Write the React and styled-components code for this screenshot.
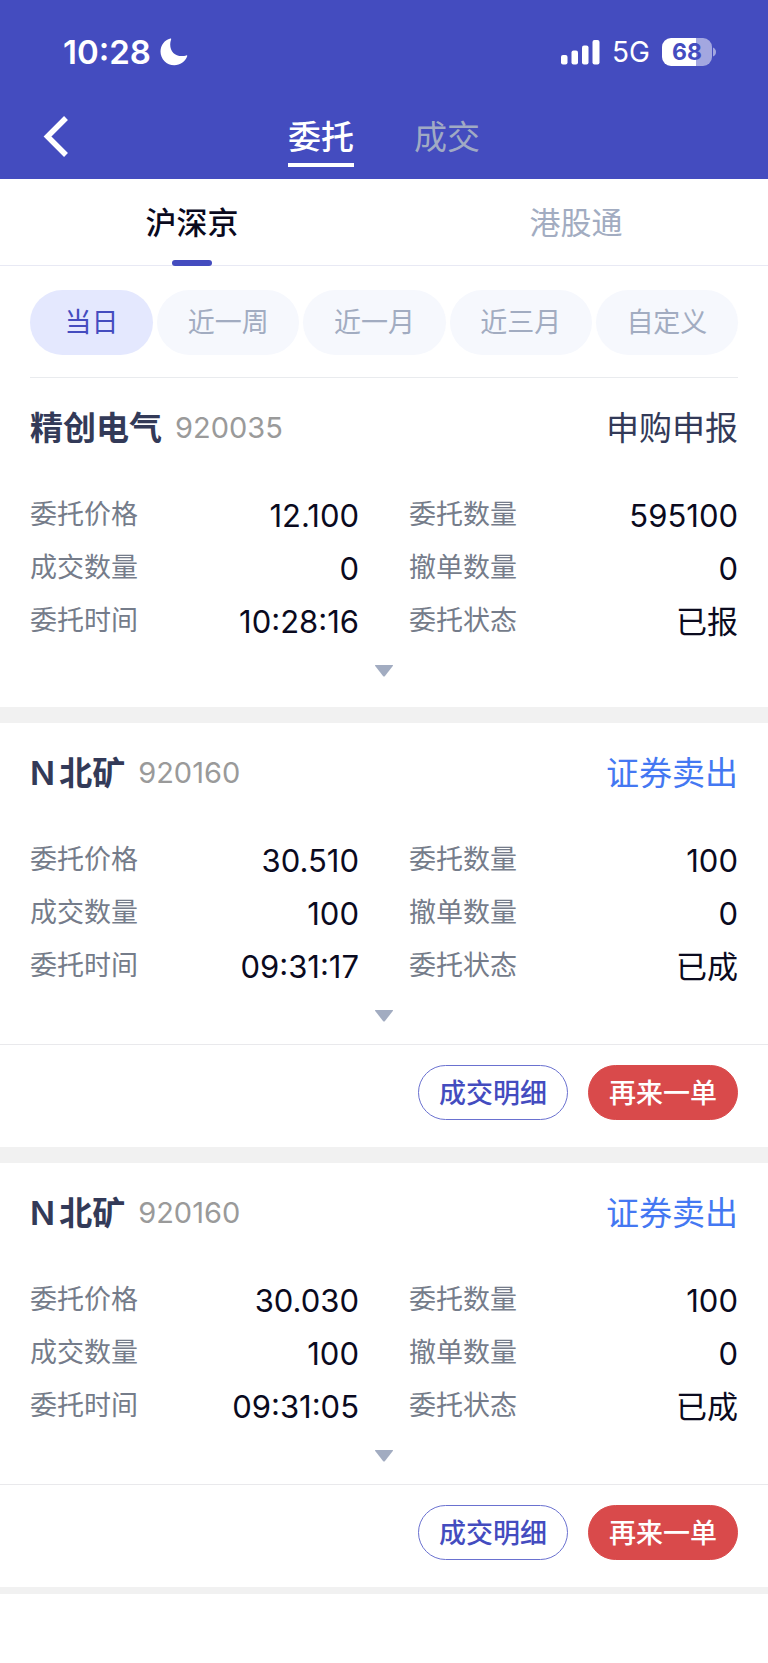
import { useState } from 'react';
import { createGlobalStyle, styled } from 'styled-components';

const ranges = ['当日', '近一周', '近一月', '近三月', '自定义'];

const orders = [
  {
    id: 1,
    name: '精创电气',
    code: '920035',
    type: '申购申报',
    price: '12.100',
    amount: '595100',
    filled: '0',
    cancelled: '0',
    time: '10:28:16',
    status: '已报',
  },
  {
    id: 2,
    name: 'N北矿',
    code: '920160',
    type: '证券卖出',
    sell: true,
    price: '30.510',
    amount: '100',
    filled: '100',
    cancelled: '0',
    time: '09:31:17',
    status: '已成',
  },
  {
    id: 3,
    name: 'N北矿',
    code: '920160',
    type: '证券卖出',
    sell: true,
    price: '30.030',
    amount: '100',
    filled: '100',
    cancelled: '0',
    time: '09:31:05',
    status: '已成',
  },
];

const StatusBar = () => {
  return (
    <StyledStatusBar>
      <StyledClock>
        10:28
        <svg width='28' height='28' viewBox='0 0 28 28' aria-hidden='true'>
          <path
            d='M10.4 .5C4.6 2 .5 7.200 .5 13.400C.5 21 6.700 27.200 14.300 27.200C20.200 27.200 25.100 23.600 27.200 18.300C27.400 17.700 27 17.200 26.300 17.400C24.900 17.900 23.300 18.100 21.800 18.100C14.800 18.100 10.200 13.400 10.200 6.500C10.200 4.700 10.500 3 11.100 1.500C11.400 .8 11 .3 10.400 .5Z'
            fill='#fff'
          />
        </svg>
      </StyledClock>
      <StyledSignals>
        <svg width='39' height='25' viewBox='0 0 39 25' aria-hidden='true'>
          <g fill='#fff'>
            <rect x='0' y='15' width='6.500' height='9.500' rx='2' />
            <rect x='10.500' y='10.500' width='6.500' height='14' rx='2' />
            <rect x='21' y='5.500' width='6.500' height='19' rx='2' />
            <rect x='31.500' y='0' width='7' height='24.500' rx='2' />
          </g>
        </svg>
        <StyledNetwork>5G</StyledNetwork>
        <StyledBattery>
          <StyledBatteryBody>68</StyledBatteryBody>
          <svg width='3' height='10' viewBox='0 0 3 10' aria-hidden='true'>
            <path d='M0 .5C2 1.500 3 3 3 5S2 8.500 0 9.500Z' fill='#a3a7e0' />
          </svg>
        </StyledBattery>
      </StyledSignals>
    </StyledStatusBar>
  );
};

const Field = ({ label, value }) => {
  return (
    <StyledField>
      <dt>{label}</dt>
      <dd>{value}</dd>
    </StyledField>
  );
};

const Order = ({ order }) => {
  return (
    <StyledOrder>
      <StyledOrderBody $compact={order.sell}>
        <StyledOrderHead>
          <StyledName>{order.name}</StyledName>
          <StyledCode>{order.code}</StyledCode>
          <StyledType $sell={order.sell}>{order.type}</StyledType>
        </StyledOrderHead>
        <StyledFields>
          <Field label='委托价格' value={order.price} />
          <Field label='委托数量' value={order.amount} />
          <Field label='成交数量' value={order.filled} />
          <Field label='撤单数量' value={order.cancelled} />
          <Field label='委托时间' value={order.time} />
          <Field label='委托状态' value={order.status} />
        </StyledFields>
        <StyledExpand aria-label='展开'>
          <svg width='20' height='12' viewBox='0 0 20 12'>
            <path d='M1.500 0H18.500Q19.500 0 18.800 1L11 11Q10 12 9 11L1.200 1Q.5 0 1.500 0Z' fill='#a2acc1' />
          </svg>
        </StyledExpand>
      </StyledOrderBody>
      {order.sell && (
        <StyledActions>
          <StyledAction>成交明细</StyledAction>
          <StyledAction $primary>再来一单</StyledAction>
        </StyledActions>
      )}
    </StyledOrder>
  );
};

const App = () => {
  const [page, setPage] = useState('委托');
  const [market, setMarket] = useState('沪深京');
  const [range, setRange] = useState('当日');

  return (
    <>
      <GlobalStyle />
      <StyledHeader>
        <StatusBar />
        <StyledNav>
          <StyledBack aria-label='返回'>
            <svg width='26' height='42' viewBox='0 0 26 42'>
              <path d='M23 2L4.500 20.500L23 39' fill='none' stroke='#fff' strokeWidth='5.500' />
            </svg>
          </StyledBack>
          <StyledPages>
            {['委托', '成交'].map((item) => (
              <StyledPage key={item} $active={item === page} onClick={() => setPage(item)}>
                {item}
              </StyledPage>
            ))}
          </StyledPages>
        </StyledNav>
      </StyledHeader>
      <main>
        <StyledMarkets>
          {['沪深京', '港股通'].map((item) => (
            <StyledMarket key={item} $active={item === market} onClick={() => setMarket(item)}>
              {item}
            </StyledMarket>
          ))}
        </StyledMarkets>
        <StyledRanges>
          {ranges.map((item) => (
            <StyledRange
              key={item}
              $short={item.length === 2}
              $active={item === range}
              onClick={() => setRange(item)}
            >
              {item}
            </StyledRange>
          ))}
        </StyledRanges>
        <StyledOrders>
          {orders.map((order) => (
            <Order key={order.id} order={order} />
          ))}
        </StyledOrders>
      </main>
    </>
  );
};

export default App;

const GlobalStyle = createGlobalStyle`
  * {
    box-sizing: border-box;
  }

  body {
    margin: 0;
    background: #fff;
    font-family: Inter, 'Noto Sans CJK SC', sans-serif;
    text-autospace: normal;
  }

  button {
    padding: 0;
    border: 0;
    background: none;
    color: inherit;
    font: inherit;
    cursor: pointer;
  }

  svg {
    display: block;
  }
`;

const StyledHeader = styled.header`
  background: #444cbf;
  color: #fff;
`;

const StyledStatusBar = styled.div`
  display: flex;
  justify-content: space-between;
  align-items: center;
  height: 94px;
  padding: 10px 52px 0 63px;
`;

const StyledClock = styled.div`
  display: flex;
  align-items: center;
  gap: 9px;
  font-size: 33px;
  font-weight: 600;
  line-height: 40px;
`;

const StyledSignals = styled.div`
  display: flex;
  align-items: center;
  gap: 12px;
`;

const StyledNetwork = styled.span`
  font-size: 28px;
  line-height: 32px;
`;

const StyledBattery = styled.div`
  display: flex;
  align-items: center;
  gap: 1px;
`;

const StyledBatteryBody = styled.span`
  width: 50px;
  border-radius: 9px;
  background: linear-gradient(to right, #fff 68%, #a3a7e0 68%);
  color: #444cbf;
  font-size: 23px;
  font-weight: 700;
  line-height: 28px;
  text-align: center;
`;

const StyledNav = styled.nav`
  display: grid;
  grid-template-columns: 1fr auto 1fr;
  height: 85px;
`;

const StyledBack = styled.button`
  justify-self: start;
  align-self: center;
  margin-left: 43px;
`;

const StyledPages = styled.div`
  display: flex;
  align-items: flex-start;
  gap: 60px;
`;

const StyledPage = styled.button`
  height: 73px;
  padding-top: 17px;
  border-bottom: 4px solid ${({ $active }) => ($active ? '#fff' : 'transparent')};
  color: ${({ $active }) => ($active ? '#fff' : '#a0aac4')};
  font-size: 33px;
  font-weight: ${({ $active }) => ($active ? 500 : 400)};
  line-height: 40px;
`;

const StyledMarkets = styled.div`
  display: flex;
  border-bottom: 1px solid #e8e9f4;
`;

const StyledMarket = styled.button`
  display: flex;
  flex: 1;
  flex-direction: column;
  align-items: center;
  justify-content: space-between;
  height: 87px;
  margin-bottom: -1px;
  padding-top: 24px;
  color: ${({ $active }) => ($active ? '#0a0a1e' : '#a2acc1')};
  font-size: 31px;
  font-weight: ${({ $active }) => ($active ? 500 : 400)};
  line-height: 40px;

  &::after {
    content: '';
    width: 40px;
    height: 6px;
    border-radius: 3px;
    background: ${({ $active }) => ($active ? '#444cbf' : 'transparent')};
  }
`;

const StyledRanges = styled.div`
  display: flex;
  gap: 4px;
  margin: 0 30px;
  padding: 24px 0 22px;
  border-bottom: 1px solid #e9ebee;
`;

const StyledRange = styled.button`
  flex: ${({ $short }) => ($short ? '123 1 0' : '142 1 0')};
  border-radius: 33px;
  background: ${({ $active }) => ($active ? '#e4e8fe' : '#f6f8fd')};
  color: ${({ $active }) => ($active ? '#444cbf' : '#a2acc1')};
  font-size: 27px;
  line-height: 65px;
`;

const StyledOrders = styled.div`
  display: flex;
  flex-direction: column;
`;

const StyledOrder = styled.article`
  border-bottom: 16px solid #f1f1f1;

  &:last-child {
    border-bottom-width: 7px;
  }
`;

const StyledOrderBody = styled.div`
  padding: 26px 30px ${({ $compact }) => ($compact ? 12 : 20)}px;
`;

const StyledOrderHead = styled.div`
  display: flex;
  align-items: center;
  height: 48px;
  line-height: 48px;
`;

const StyledName = styled.h2`
  margin: 0;
  color: #333a58;
  font-size: 33px;
  font-weight: 600;
`;

const StyledCode = styled.span`
  margin-left: 13px;
  color: #9a9a9a;
  font-size: 29px;
`;

const StyledType = styled.span`
  margin-left: auto;
  color: ${({ $sell }) => ($sell ? '#4478f2' : '#333a58')};
  font-size: 33px;
`;

const StyledFields = styled.dl`
  display: grid;
  grid-template-columns: 1fr 1fr;
  column-gap: 50px;
  margin: 36px 0 0;
`;

const StyledField = styled.div`
  display: flex;
  justify-content: space-between;
  height: 53px;

  dt {
    color: #757c8a;
    font-size: 27px;
    line-height: 53px;
  }

  dd {
    margin: 0;
    padding-top: 1px;
    color: #0a0a1e;
    font-size: 31px;
    line-height: 53px;
  }
`;

const StyledExpand = styled.button`
  display: flex;
  justify-content: center;
  width: 100%;
  padding: 18px 0 10px;
`;

const StyledActions = styled.div`
  display: flex;
  justify-content: flex-end;
  gap: 20px;
  padding: 20px 30px 26px;
  border-top: 1px solid #e9e9ec;
`;

const StyledAction = styled.button`
  width: 150px;
  height: 55px;
  padding-bottom: 2px;
  margin-bottom: 1px;
  border: 1px solid ${({ $primary }) => ($primary ? '#d94a4b' : '#6a71d0')};
  border-radius: 28px;
  background: ${({ $primary }) => ($primary ? '#d94a4b' : '#fff')};
  color: ${({ $primary }) => ($primary ? '#fff' : '#444cbf')};
  font-size: 27px;
  font-weight: 500;
`;
